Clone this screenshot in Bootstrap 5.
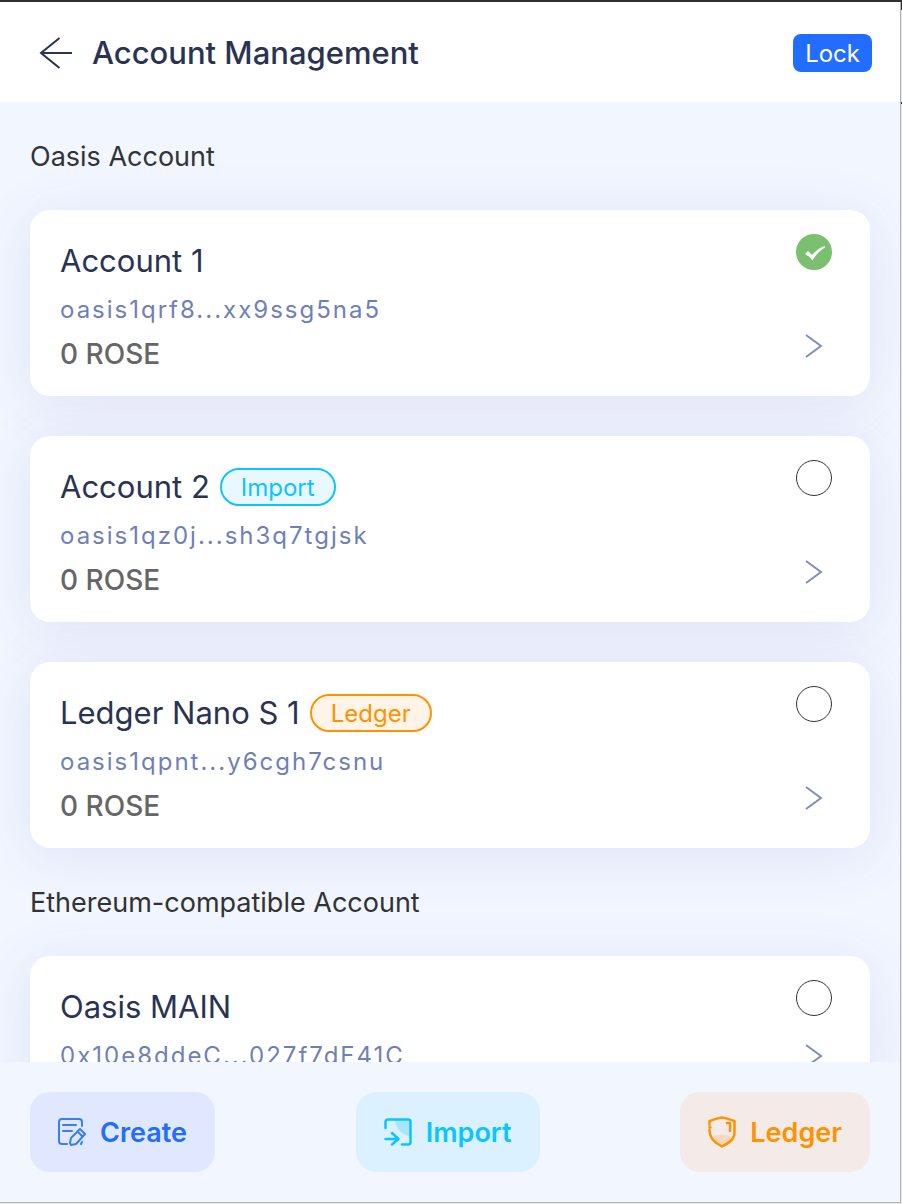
<!DOCTYPE html>
<html lang="en">
<head>
<meta charset="utf-8">
<meta name="viewport" content="width=device-width, initial-scale=1">
<title>Account Management</title>
<link href="https://cdn.jsdelivr.net/npm/bootstrap@5.3.0/dist/css/bootstrap.min.css" rel="stylesheet">
<style>
  body {
    font-family: Inter, "Liberation Sans", sans-serif;
    color: #333;
    background: linear-gradient(#2f2e31 10px, #e6e6e6 10px, #e6e6e6 102px, #2f2e31 102px, #2f2e31 104px, #e6e6e6 104px);
    border-top: 2px solid #2f2e31;
    padding: 0 1px 1px 0;
  }
  .wallet { background: #f1f6ff; border: solid #b4b4b6; border-width: 0 1px 1px 0; }
  .wallet-top { padding: 32px 28px 30px 38px; }
  .wallet-heading { gap: 18px; }
  .wallet-title { font-size: 31px; line-height: 38px; font-weight: 500; color: #2a3352; }
  .icon-btn { background: none; border: 0; padding: 0; display: flex; }
  .lock-btn { background: #226cff; color: #fff; font-size: 24px; line-height: 36px; padding: 2px 12px 0; border: 0; border-radius: 8px; }
  .wallet-list { min-height: 0; overflow-y: auto; scrollbar-width: none; padding: 0 30px; }
  .wallet-list::-webkit-scrollbar { display: none; }
  .account-group { gap: 40px; }
  .group-title { font-size: 27px; line-height: 40px; font-weight: 400; margin: 35px 0 33px; color: #333; }
  .account { background: #fff; border: 0; border-radius: 20px; padding: 0 38px 0 30px; box-shadow: 0 8px 60px rgba(108, 74, 160, .11); }
  .account-info { padding: 30px 0 22px; }
  .account-name { font-size: 31px; line-height: 42px; font-weight: 400; color: #2a3352; }
  .name-row { gap: 10px; }
  .address { font-size: 24px; line-height: 36px; letter-spacing: 2px; margin-top: 10px; color: #6f7fb7; }
  .balance { font-size: 28px; line-height: 40px; font-weight: 500; margin-top: 6px; color: #666; }
  .account-side { padding: 24px 0 36px; }
  .tag { font-size: 24px; line-height: 32px; padding: 2px 19px 0; border: 2px solid; border-radius: 19px; }
  .tag-import { color: #0ac5ff; background: #e9f8ff; }
  .tag-ledger { color: #ff9200; background: #fff4e7; }
  .pick.form-check-input { width: 36px; height: 36px; margin: 0; border: 1px solid #333; }
  .pick.form-check-input:checked {
    border: 0; background-color: #7ac070; background-size: 36px 36px;
    background-image: url("data:image/svg+xml,%3Csvg xmlns='http://www.w3.org/2000/svg' viewBox='0 0 36 36'%3E%3Cpath fill='%23fff' d='M9 20l3-3 4 4c4-4 8-7.500 12.500-9l.5 1.500c-5 3-9 7-12.500 13-2-2.500-4-5-5.500-5z'/%3E%3C/svg%3E");
  }
  .wallet-actions { background: #f1f6ff; padding: 30px; }
  .action { font-size: 27px; line-height: 40px; font-weight: 600; padding: 20px 28px; border: 0; border-radius: 20px; gap: 14px; }
  .action-label { padding-top: 2px; line-height: 38px; }
  .action-create { color: #226cff; background: #e0e8ff; }
  .action-import { color: #0ac5ff; background: #dcf1ff; }
  .action-ledger { color: #ff9200; background: #f4ebe8; }
</style>
</head>
<body class="vh-100">
<div class="wallet h-100 d-flex flex-column">
  <header class="wallet-top bg-white d-flex align-items-center justify-content-between">
    <div class="wallet-heading d-flex align-items-center">
      <button class="icon-btn" type="button" aria-label="Back">
        <svg width="36" height="36" viewBox="0 0 36 36" fill="none" stroke="#2a3352" stroke-width="2"><path d="M34 18H3M21.500 3L3 18l18.500 15"/></svg>
      </button>
      <h1 class="wallet-title mb-0">Account Management</h1>
    </div>
    <button class="lock-btn" type="button">Lock</button>
  </header>

  <main class="wallet-list flex-grow-1">
    <h2 class="group-title">Oasis Account</h2>
    <div class="account-group d-grid">
      <section class="account card flex-row justify-content-between">
        <div class="account-info">
          <label class="account-name d-block" for="a1">Account 1</label>
          <div class="address">oasis1qrf8...xx9ssg5na5</div>
          <div class="balance">0 ROSE</div>
        </div>
        <div class="account-side d-flex flex-column justify-content-between align-items-center">
          <input class="pick form-check-input" type="radio" name="account" id="a1" checked>
          <button class="icon-btn" type="button" aria-label="Account 1 details"><svg width="20" height="28" viewBox="0 0 20 28" fill="none" stroke="#7f8dbf" stroke-width="2"><path d="M2 3l15 11L2 25"/></svg></button>
        </div>
      </section>
      <section class="account card flex-row justify-content-between">
        <div class="account-info">
          <div class="name-row d-flex align-items-center">
            <label class="account-name" for="a2">Account 2</label>
            <span class="tag tag-import">Import</span>
          </div>
          <div class="address">oasis1qz0j...sh3q7tgjsk</div>
          <div class="balance">0 ROSE</div>
        </div>
        <div class="account-side d-flex flex-column justify-content-between align-items-center">
          <input class="pick form-check-input" type="radio" name="account" id="a2">
          <button class="icon-btn" type="button" aria-label="Account 2 details"><svg width="20" height="28" viewBox="0 0 20 28" fill="none" stroke="#7f8dbf" stroke-width="2"><path d="M2 3l15 11L2 25"/></svg></button>
        </div>
      </section>
      <section class="account card flex-row justify-content-between">
        <div class="account-info">
          <div class="name-row d-flex align-items-center">
            <label class="account-name" for="a3">Ledger Nano S 1</label>
            <span class="tag tag-ledger">Ledger</span>
          </div>
          <div class="address">oasis1qpnt...y6cgh7csnu</div>
          <div class="balance">0 ROSE</div>
        </div>
        <div class="account-side d-flex flex-column justify-content-between align-items-center">
          <input class="pick form-check-input" type="radio" name="account" id="a3">
          <button class="icon-btn" type="button" aria-label="Ledger Nano S 1 details"><svg width="20" height="28" viewBox="0 0 20 28" fill="none" stroke="#7f8dbf" stroke-width="2"><path d="M2 3l15 11L2 25"/></svg></button>
        </div>
      </section>
    </div>

    <h2 class="group-title">Ethereum-compatible Account</h2>
    <section class="account card flex-row justify-content-between">
      <div class="account-info pb-4">
        <label class="account-name d-block" for="a4">Oasis MAIN</label>
        <div class="address mb-2">0x10e8ddeC...027f7dF41C</div>
      </div>
      <div class="account-side d-flex flex-column justify-content-between align-items-center">
        <input class="pick form-check-input" type="radio" name="account" id="a4">
        <button class="icon-btn" type="button" aria-label="Oasis MAIN details"><svg width="20" height="28" viewBox="0 0 20 28" fill="none" stroke="#7f8dbf" stroke-width="2"><path d="M2 3l15 11L2 25"/></svg></button>
      </div>
    </section>
  </main>

  <footer class="wallet-actions d-flex justify-content-between">
    <button class="action action-create d-flex align-items-center" type="button">
      <svg width="28" height="28" viewBox="0 0 28 28" fill="none" stroke="#3b7df5" stroke-width="2" stroke-linecap="round" stroke-linejoin="round"><path d="M9 26H4a3 3 0 0 1-3-3V4a3 3 0 0 1 3-3h17a3 3 0 0 1 3 3v4M5 7h13M5 13h9M12 25l1-5 9-9 5 5-9 10-5 1zM20 14l4 4M23 26l1-2"/></svg>
      <span class="action-label">Create</span>
    </button>
    <button class="action action-import d-flex align-items-center" type="button">
      <svg width="28" height="28" viewBox="0 0 28 28" fill="none" stroke="currentColor" stroke-width="2.500" stroke-linecap="round" stroke-linejoin="round"><path d="M11 2h15v16C18 17 12 11 11 2z" fill="#a6e6ff" stroke="none"/><path d="M1.500 10V4a2.500 2.500 0 0 1 2.500-2.500h20a2.500 2.500 0 0 1 2.500 2.500v20a2.500 2.500 0 0 1-2.500 2.500h-6M1.500 21H14M8 15l6.500 6L8 26.500"/></svg>
      <span class="action-label">Import</span>
    </button>
    <button class="action action-ledger d-flex align-items-center" type="button">
      <svg width="28" height="32" viewBox="0 0 28 32" fill="none" stroke="currentColor" stroke-width="2.500" stroke-linecap="round" stroke-linejoin="round"><path d="M4 21c6-3 14-3 20 0-2 5-6 7-10 8.500-4-1.500-8-3.500-10-8.500z" fill="#f8d9b9" stroke="none"/><path d="M1.500 9V5C6 4 9 2 14 1.500 19 2 22 4 26.500 5v11c0 8-6 11-12.500 14.500C7 27 2 23 1.500 14M1.500 11.500h1"/><path d="M19 7h3v8"/></svg>
      <span class="action-label">Ledger</span>
    </button>
  </footer>
</div>
<script src="https://cdn.jsdelivr.net/npm/bootstrap@5.3.0/dist/js/bootstrap.bundle.min.js"></script>
</body>
</html>
